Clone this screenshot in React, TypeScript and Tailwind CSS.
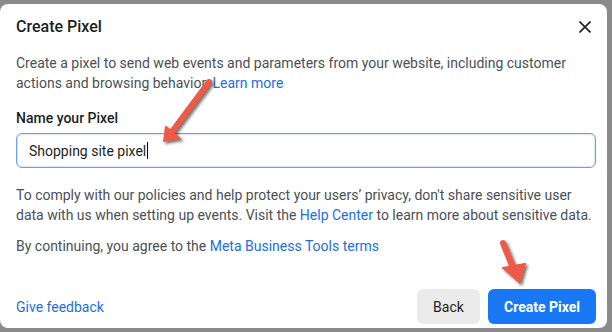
import React from 'react'

const Arrow = ({ tail, tip, left, right }: { tail: string; tip: string; left: string; right: string }) => (
  <g>
    <path d={`M${tail} L${tip}`} stroke="#ef5a47" strokeWidth="6" strokeLinecap="round" fill="none" />
    <polygon points={`${left} ${tip} ${right}`} fill="#ef5a47" strokeLinejoin="round" stroke="#ef5a47" strokeWidth="2" />
  </g>
)

const App = () => {
  return (
    <div className="relative w-[612px] h-[332px] bg-[#8a8a8a] pt-[4px] pr-[5px] font-['Roboto',sans-serif] text-[14px] leading-[20px] text-[#4b4f56] overflow-hidden">
      <div className="w-[607px] h-[324px] bg-white rounded-[8px] pl-[16px] pr-[11px] pt-[13px] flex flex-col">
        <div className="flex items-center justify-between">
          <h2 className="text-[16px] leading-[20px] font-medium text-[#1c1e21]">Create Pixel</h2>
          <button className="mr-[5px] w-[12px] h-[12px] flex items-center justify-center">
            <svg width="12" height="12" viewBox="0 0 12 12">
              <path d="M0.5 0.5 L11.5 11.5 M11.5 0.5 L0.5 11.5" stroke="#1c1e21" strokeWidth="1.6" />
            </svg>
          </button>
        </div>

        <p className="mt-[16px]">
          Create a pixel to send web events and parameters from your website, including customer actions and browsing behavior.{' '}
          <a className="text-[#216fdb]">Learn more</a>
        </p>

        <label className="mt-[15px] font-medium text-[#1c1e21]">Name your Pixel</label>
        <div className="mt-[5px] h-[35px] rounded-[6px] border border-[#6a9ff0] shadow-[inset_0_0_0_1px_#dde9fb] flex items-center pl-[12px] text-[#1c1e21]">
          <span>Shopping site pixel</span>
          <span className="w-px h-[17px] bg-black ml-[1px]"></span>
        </div>

        <p className="mt-[17px]">
          To comply with our policies and help protect your users’ privacy, don't share sensitive user data with us when setting up events. Visit the{' '}
          <a className="text-[#216fdb]">Help Center</a> to learn more about sensitive data.
        </p>

        <p className="mt-[11px]">
          By continuing, you agree to the <a className="text-[#216fdb]">Meta Business Tools terms</a>
        </p>

        <div className="mt-auto mb-[4px] flex items-center justify-between">
          <a className="text-[#216fdb]">Give feedback</a>
          <div className="flex gap-[8px]">
            <button className="w-[63px] h-[35px] rounded-[6px] bg-[#ebebeb] text-[#1c1e21]">Back</button>
            <button className="w-[108px] h-[35px] rounded-[6px] bg-[#1877f2] text-white font-bold">Create Pixel</button>
          </div>
        </div>
      </div>

      <svg className="absolute inset-0 pointer-events-none drop-shadow-[2px_2px_1.5px_rgba(0,0,0,0.55)]" width="612" height="332">
        <Arrow tail="209,82" tip="171,133" left="166,127" right="180,139" />
        <polygon points="163,142 165,126 181,139" fill="#ef5a47" />
        <Arrow tail="503,243" tip="514,270" left="503,268" right="525,264" />
        <polygon points="520,284 502,268 526,263" fill="#ef5a47" />
      </svg>
    </div>
  )
}

export default App
